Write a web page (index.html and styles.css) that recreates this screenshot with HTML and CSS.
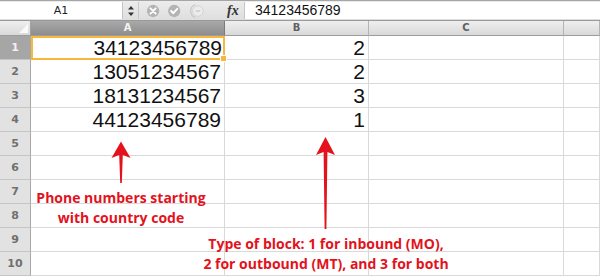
FILE: index.html
```html
<!DOCTYPE html>
<html lang="en">
<head>
  <meta charset="UTF-8" />
  <title>Sheet</title>
  <link rel="stylesheet" href="styles.css">
</head>
<body>

  <!-- Formula bar -->
  <div class="toolbar">
    <div class="namebox">A1</div>
    <div class="stepper">
      <svg width="8" height="12" viewBox="0 0 8 12">
        <path d="M4 1 L7 4.5 L1 4.5 Z M4 11 L7 7.5 L1 7.5 Z" fill="#333"/>
      </svg>
    </div>
    <div class="tools">
      <svg width="100" height="18" viewBox="0 0 100 18">
        <circle cx="16" cy="9" r="7" fill="#b4b4b4"/>
        <path d="M13 6 L19 12 M19 6 L13 12" stroke="#fff" stroke-width="2.2" stroke-linecap="round"/>
        <circle cx="40" cy="9" r="7" fill="#b4b4b4"/>
        <path d="M36.5 9 L39 11.5 L43.5 6.5" stroke="#fff" stroke-width="2.2" fill="none" stroke-linecap="round" stroke-linejoin="round"/>
        <path d="M64 1.5 A8 8 0 0 0 64 16.5" stroke="#c4c4c4" stroke-width="1.2" fill="none"/>
        <circle cx="67" cy="9" r="6" fill="#ececec" stroke="#d0d0d0" stroke-width="1"/>
        <path d="M64.5 9 L69.5 9" stroke="#c8c8c8" stroke-width="1.6"/>
      </svg>
    </div>
    <div class="fx">fx</div>
    <div class="formula">34123456789</div>
  </div>

  <!-- Sheet grid -->
  <div class="sheet">
    <div class="corner"></div>
    <div class="colhead sel">A</div>
    <div class="colhead">B</div>
    <div class="colhead">C</div>
    <div class="colhead"></div>

    <div class="rowhead sel">1</div>
    <div class="cell num active">34123456789</div>
    <div class="cell num">2</div>
    <div class="cell"></div>
    <div class="cell"></div>

    <div class="rowhead">2</div>
    <div class="cell num">13051234567</div>
    <div class="cell num">2</div>
    <div class="cell"></div>
    <div class="cell"></div>

    <div class="rowhead">3</div>
    <div class="cell num">18131234567</div>
    <div class="cell num">3</div>
    <div class="cell"></div>
    <div class="cell"></div>

    <div class="rowhead">4</div>
    <div class="cell num">44123456789</div>
    <div class="cell num">1</div>
    <div class="cell"></div>
    <div class="cell"></div>

    <div class="rowhead">5</div>
    <div class="cell"></div><div class="cell"></div><div class="cell"></div><div class="cell"></div>
    <div class="rowhead">6</div>
    <div class="cell"></div><div class="cell"></div><div class="cell"></div><div class="cell"></div>
    <div class="rowhead">7</div>
    <div class="cell"></div><div class="cell"></div><div class="cell"></div><div class="cell"></div>
    <div class="rowhead">8</div>
    <div class="cell"></div><div class="cell"></div><div class="cell"></div><div class="cell"></div>
    <div class="rowhead">9</div>
    <div class="cell"></div><div class="cell"></div><div class="cell"></div><div class="cell"></div>
    <div class="rowhead">10</div>
    <div class="cell"></div><div class="cell"></div><div class="cell"></div><div class="cell"></div>
  </div>

  <!-- Annotations -->
  <svg class="arrows" width="600" height="277" viewBox="0 0 600 277">
    <path d="M121 141.5 L130.5 158 L122.8 155 L121.8 183 L120.2 183 L119.2 155 L111.5 158 Z" fill="#e3121c"/>
    <path d="M325.5 137 L335 155 L327.4 152 L326.4 229 L324.6 229 L323.6 152 L316 155 Z" fill="#e3121c"/>
  </svg>
  <div class="note note-phone">Phone numbers starting<br>with country code</div>
  <div class="note note-type">Type of block: 1 for inbound (MO),<br>2 for outbound (MT), and 3 for both</div>

</body>
</html>
```

FILE: styles.css
```css
/* -- Base -- */
* { box-sizing: border-box; margin: 0; padding: 0; }
body {
  width: 600px;
  height: 277px;
  overflow: hidden;
  position: relative;
  background: #fff;
  font-family: 'Liberation Sans', Arial, sans-serif;
  color: #111;
}

/* -- Formula bar -- */
.toolbar {
  display: flex;
  height: 21px;
  border-top: 1px solid #a6a6a6;
  border-bottom: 1px solid #9a9a9a;
  background: linear-gradient(#ececec, #dedede);
  padding: 1px 0 1px;
}
.namebox {
  width: 123px;
  background: #fff;
  border-right: 1px solid #c4c4c4;
  font-family: 'DejaVu Sans', sans-serif;
  font-size: 11px;
  color: #222;
  text-align: center;
  line-height: 17px;
}
.stepper {
  width: 16px;
  display: flex;
  align-items: center;
  justify-content: center;
  border-right: 1px solid #c8c8c8;
}
.tools {
  width: 88px;
  display: flex;
  align-items: center;
}
.fx {
  width: 17px;
  font-family: 'Liberation Serif', serif;
  font-style: italic;
  font-weight: bold;
  font-size: 14px;
  color: #333;
  line-height: 17px;
}
.formula {
  flex: 1;
  background: #fff;
  border-left: 1px solid #c4c4c4;
  font-size: 14px;
  line-height: 17px;
  padding-left: 10px;
}

/* -- Sheet grid -- */
.sheet {
  display: grid;
  grid-template-columns: 31px 194px 144px 195px 1fr;
  grid-template-rows: 15px repeat(10, 24px);
}
.corner, .colhead {
  background: linear-gradient(#efefef, #d9d9d9);
  border-right: 1px solid #b4b4b4;
  border-bottom: 1px solid #9c9c9c;
}
.corner {
  position: relative;
  border-right-color: #a0a0a0;
}
.corner::after {
  content: "";
  position: absolute;
  right: 2px;
  bottom: 2px;
  border-left: 9px solid transparent;
  border-bottom: 9px solid #fafafa;
}
.colhead {
  font-family: 'DejaVu Sans', sans-serif;
  font-weight: bold;
  font-size: 10px;
  color: #606060;
  text-align: center;
  line-height: 14px;
}
.colhead.sel {
  background: linear-gradient(#a9a9a9, #8d8d8d);
  color: #f4f4f4;
  border-right-color: #7a7a7a;
}
.rowhead {
  background: #e2e2e2;
  border-right: 1px solid #a8a8a8;
  border-bottom: 1px solid #c6c6c6;
  font-family: 'DejaVu Sans', sans-serif;
  font-weight: bold;
  font-size: 11px;
  color: #707070;
  text-align: center;
  line-height: 24px;
}
.rowhead.sel {
  background: #a6a6a6;
  color: #f0f0f0;
}
.cell {
  border-right: 1px solid #d9d9d9;
  border-bottom: 1px solid #d9d9d9;
}
.num {
  font-size: 21px;
  line-height: 23px;
  text-align: right;
  padding-right: 3px;
}
.active {
  position: relative;
  border: 2px solid #f6b73c;
  line-height: 19px;
  padding-right: 1px;
}
.active::after {
  content: "";
  position: absolute;
  right: -4px;
  bottom: -4px;
  width: 5px;
  height: 5px;
  background: #f6b73c;
  border: 1px solid #fff;
}

/* -- Annotations -- */
.arrows {
  position: absolute;
  top: 0;
  left: 0;
}
.note {
  position: absolute;
  font-family: 'Open Sans', sans-serif;
  font-weight: bold;
  font-size: 14px;
  line-height: 20px;
  color: #e3121c;
  text-align: center;
  white-space: nowrap;
}
.note-phone {
  left: 21px;
  top: 188px;
  width: 200px;
}
.note-type {
  left: 196px;
  top: 234px;
  width: 260px;
}
```
